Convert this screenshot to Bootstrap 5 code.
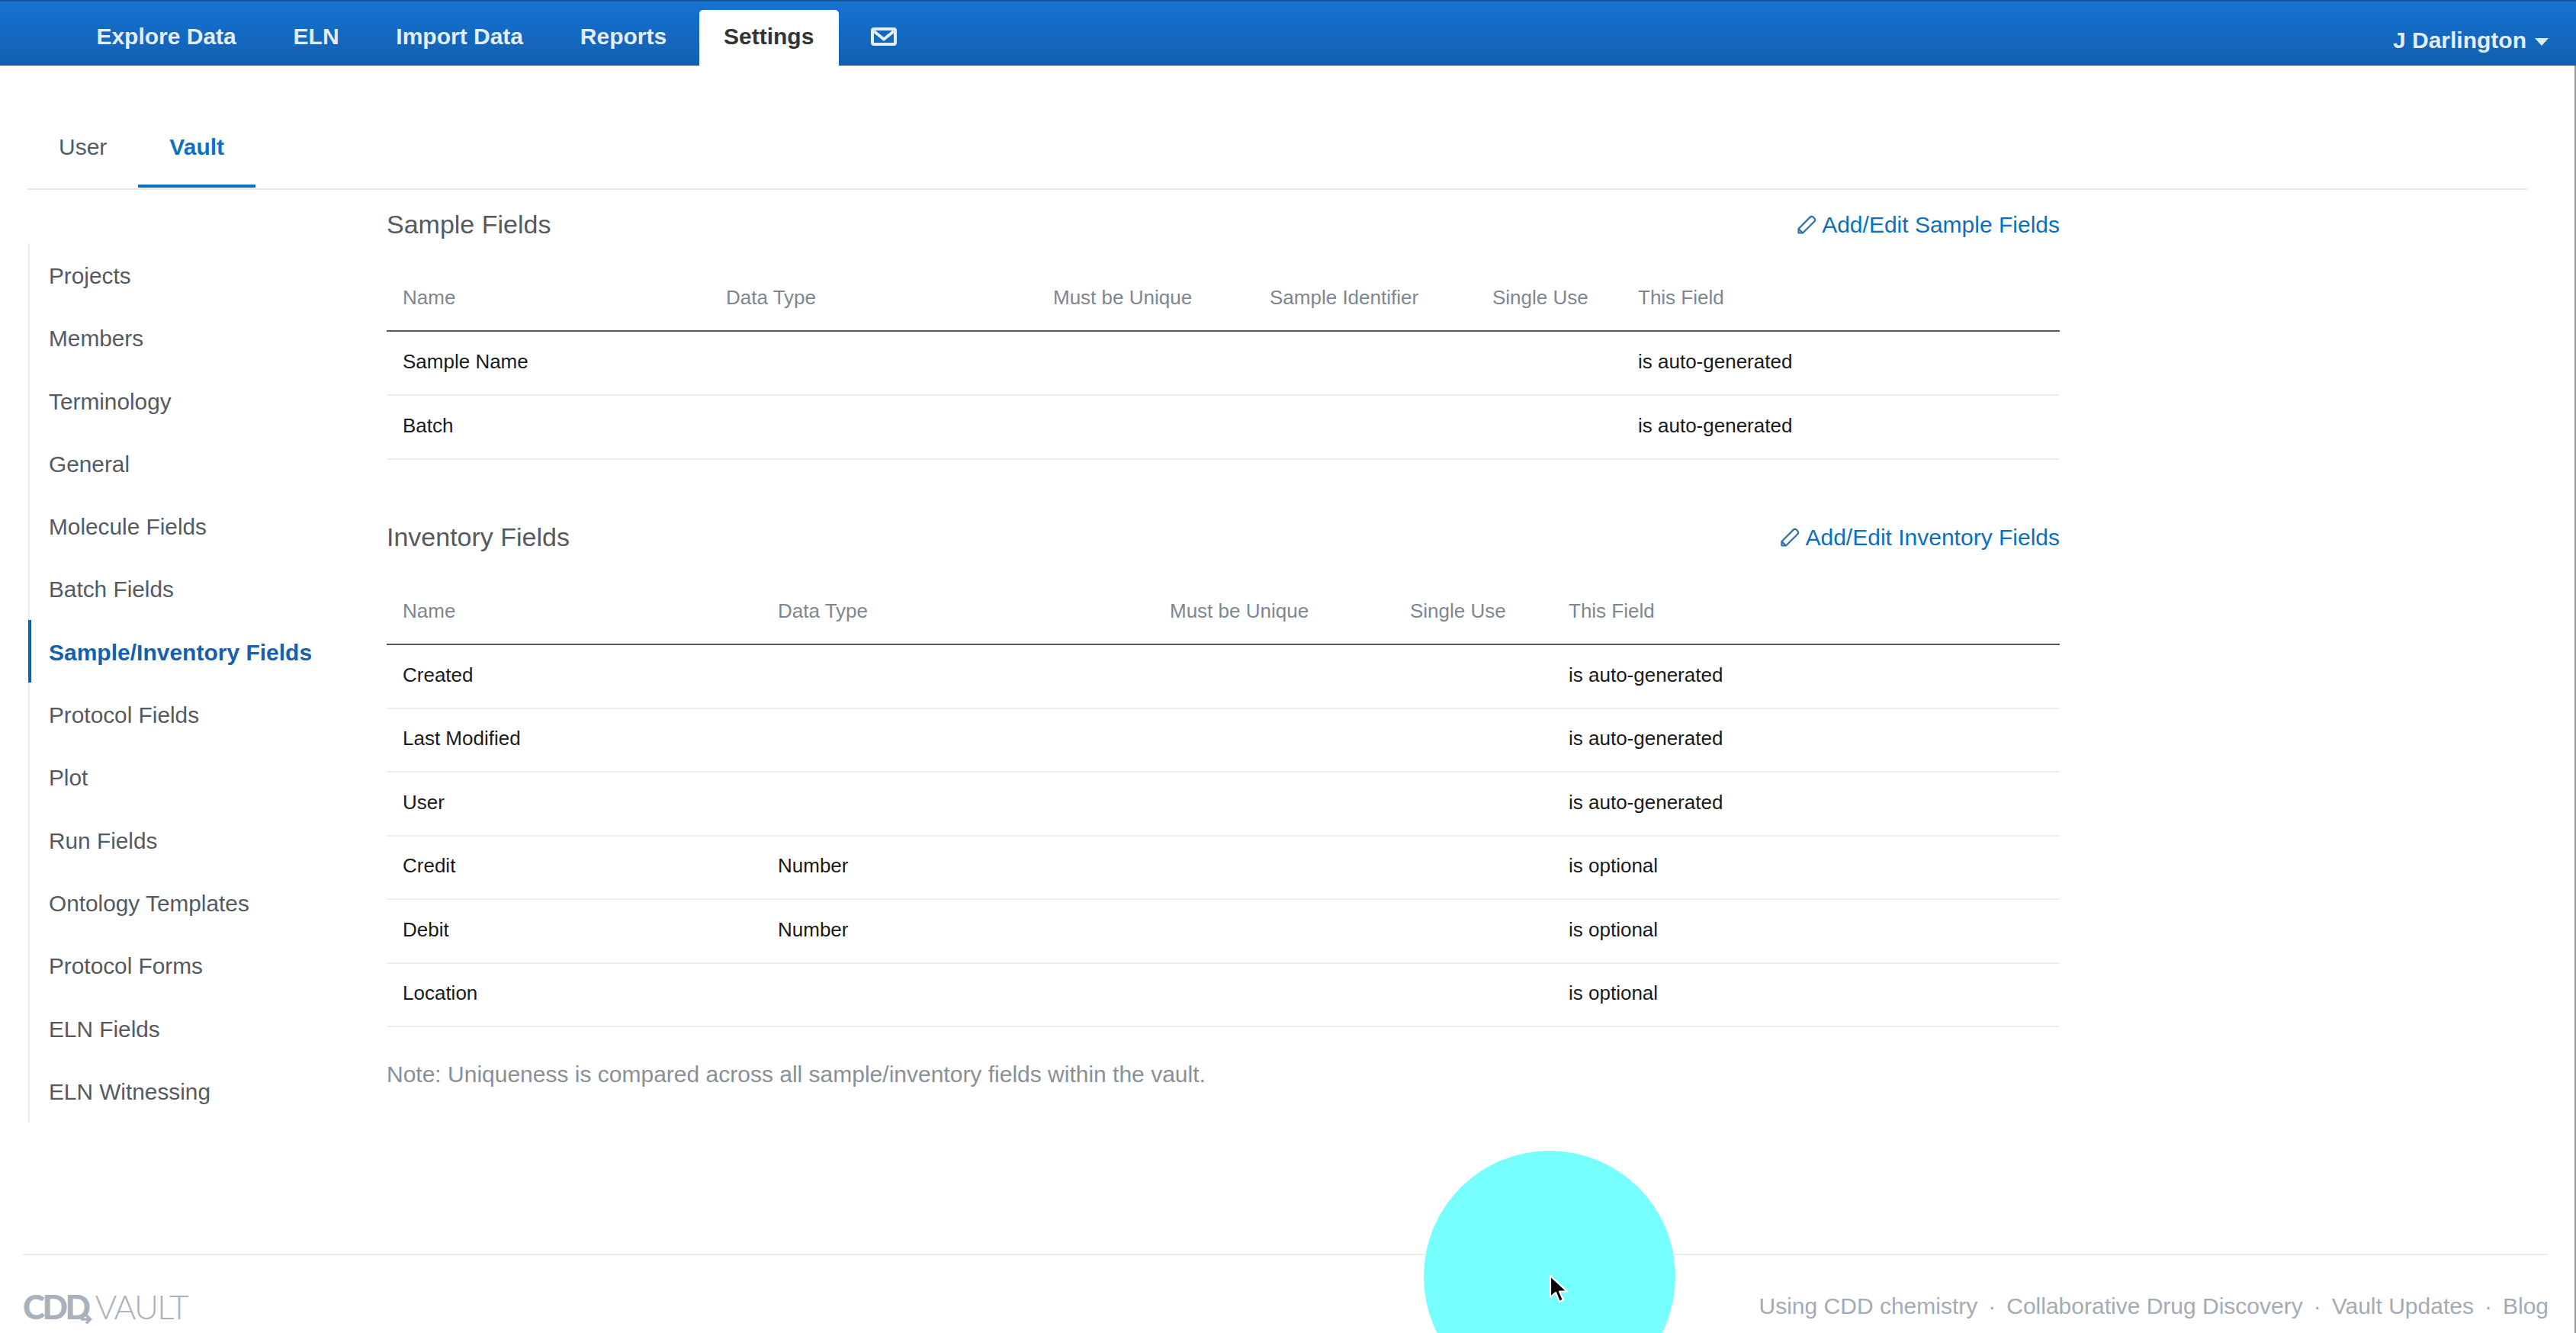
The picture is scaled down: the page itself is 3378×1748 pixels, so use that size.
<!DOCTYPE html>
<html lang="en">
<head>
<meta charset="utf-8">
<title>Settings</title>
<link href="https://cdn.jsdelivr.net/npm/bootstrap@5.3.0/dist/css/bootstrap.min.css" rel="stylesheet">
<style>
html,body{height:100%;}
body{font-family:"Liberation Sans",Arial,sans-serif;font-size:30px;color:#555a62;background:#fff;overflow:hidden;display:flex;flex-direction:column;position:relative;}
.topbar{height:86px;padding:0 36px 0 94px;background:linear-gradient(#1672d2,#1160b0);border-top:2px solid #14559c;align-items:flex-end;flex-wrap:nowrap;flex-shrink:0;}
.topnav{gap:10px;height:100%;align-items:flex-end;}
.topbar.navbar-expand .topnav .nav-link{height:73px;padding:15px 32.4px 0;font-size:30px;line-height:40px;font-weight:700;color:#e2edf8;border-radius:5px 5px 0 0;}
.topbar.navbar-expand .topnav .nav-link.active{background:#fff;color:#333;}
.topbar.navbar-expand .topnav .mail-link{padding-top:23px;}
.mail-link svg{display:block;}
.user-menu{color:#e2edf8;font-weight:700;font-size:30px;line-height:40px;margin-bottom:13px;display:flex;align-items:center;gap:11px;}
.caret-mark{width:0;height:0;border-left:9px solid transparent;border-right:9px solid transparent;border-top:10px solid #dfeaf6;margin-top:4px;}
.tabstrip{margin:0 64px 0 36px;height:163px;border-bottom:2px solid #e5e6e8;align-items:flex-end;flex-shrink:0;}
.tabstrip .nav-link{padding:0 41px;height:68px;line-height:29px;font-size:30px;color:#555a62;border-bottom:4px solid transparent;margin-bottom:1px;}
.tabstrip .nav-link.active{color:#0a72c6;font-weight:700;border-bottom-color:#0a70c4;}
.sidenav{width:470px;margin:70px 0 0 37px;height:1152px;border-left:2px solid #e9ecef;flex-shrink:0;flex-wrap:nowrap;}
.sidenav .nav-link{height:82.3px;line-height:85px;padding:0 0 0 23px;font-size:29.8px;color:#555a62;margin-left:-2px;border-left:4px solid transparent;white-space:nowrap;}
.sidenav .nav-link.active{color:#1560ad;font-weight:700;font-size:30px;border-left-color:#1560ad;}
.fields-pane{width:2194px;flex-shrink:0;}
.section-head{height:50px;margin:20px 0 27px;line-height:50px;}
.section-title{font-size:34px;font-weight:400;color:#555a62;margin:0;line-height:50px;}
.edit-link{font-size:30px;color:#0a6fc2;text-decoration:none;display:flex;align-items:center;gap:7px;padding-top:1px;}
.fields-table{table-layout:fixed;width:100%;margin-bottom:76px;font-size:26px;}
.fields-table th{height:88px;padding:2px 0 0 21px;vertical-align:middle;font-weight:400;color:#7d8792;border-bottom:2px solid #555a62;white-space:nowrap;}
.fields-table td{height:84px;padding:0 0 3px 21px;vertical-align:middle;color:#1a1a1a;border-bottom:2px solid #eceef0;}
.fields-table.inv-table th{height:89px;padding-top:3px;}
.fields-table.inv-table td{height:83.5px;padding-bottom:3px;}
.fields-table.inv-table{margin-bottom:0;}
.c1{width:424px}.c2{width:429px}.c3{width:284px}.c4{width:292px}.c5{width:191px}.c6{width:574px}
.i1{width:492px}.i2{width:514px}.i3{width:315px}.i4{width:208px}.i5{width:665px}
.note-line{font-size:30px;color:#8a8f96;margin:44px 0 0;line-height:36px;}
.pagefoot{margin:auto 36px 0 30px;height:104px;padding-top:32px;border-top:2px solid #ecedef;flex-shrink:0;}
.brand-logo{display:flex;align-items:center;line-height:44px;color:#a9b1bd;font-family:Lato,"Liberation Sans",sans-serif;font-size:44px;}
.brand-cdd{font-weight:900;letter-spacing:-3.5px;}
.brand-mark{margin-left:-9px;margin-bottom:-3px;}
.brand-vault{font-weight:300;margin-left:2px;letter-spacing:-1.7px;}
.foot-links{color:#a3abb6;font-size:30px;line-height:40px;}
.foot-links a{color:inherit;text-decoration:none;}
.foot-dot{margin:0 14px;}
.overlay-layer{position:absolute;top:0;left:0;right:0;bottom:0;overflow:hidden;pointer-events:none;}
.click-spot{position:absolute;left:1867px;top:1509px;width:330px;height:330px;border-radius:50%;background:rgba(115,255,255,.97);}
.mouse-arrow{position:absolute;left:2030px;top:1670px;}
.edge-rule{position:absolute;top:86px;right:0;bottom:0;width:2px;background:#999;}
</style>
</head>
<body>
<nav class="navbar navbar-expand topbar">
  <ul class="navbar-nav topnav">
    <li class="nav-item"><a class="nav-link" href="#">Explore Data</a></li>
    <li class="nav-item"><a class="nav-link" href="#">ELN</a></li>
    <li class="nav-item"><a class="nav-link" href="#">Import Data</a></li>
    <li class="nav-item"><a class="nav-link" href="#">Reports</a></li>
    <li class="nav-item"><a class="nav-link active" href="#">Settings</a></li>
    <li class="nav-item"><a class="nav-link mail-link" href="#" aria-label="Messages"><svg width="34" height="24" viewBox="0 0 34 24"><rect width="34" height="24" rx="4" fill="#e2edf8"/><rect x="4" y="4" width="26" height="16" fill="#1468ba"/><path d="M4 5 17 15.5 30 5" fill="none" stroke="#e2edf8" stroke-width="4"/></svg></a></li>
  </ul>
  <div class="user-menu ms-auto">J Darlington<span class="caret-mark"></span></div>
</nav>

<ul class="nav tabstrip">
  <li class="nav-item"><a class="nav-link" href="#">User</a></li>
  <li class="nav-item"><a class="nav-link active" href="#">Vault</a></li>
</ul>

<main class="d-flex">
  <ul class="nav flex-column sidenav">
    <li class="nav-item"><a class="nav-link" href="#">Projects</a></li>
    <li class="nav-item"><a class="nav-link" href="#">Members</a></li>
    <li class="nav-item"><a class="nav-link" href="#">Terminology</a></li>
    <li class="nav-item"><a class="nav-link" href="#">General</a></li>
    <li class="nav-item"><a class="nav-link" href="#">Molecule Fields</a></li>
    <li class="nav-item"><a class="nav-link" href="#">Batch Fields</a></li>
    <li class="nav-item"><a class="nav-link active" href="#">Sample/Inventory Fields</a></li>
    <li class="nav-item"><a class="nav-link" href="#">Protocol Fields</a></li>
    <li class="nav-item"><a class="nav-link" href="#">Plot</a></li>
    <li class="nav-item"><a class="nav-link" href="#">Run Fields</a></li>
    <li class="nav-item"><a class="nav-link" href="#">Ontology Templates</a></li>
    <li class="nav-item"><a class="nav-link" href="#">Protocol Forms</a></li>
    <li class="nav-item"><a class="nav-link" href="#">ELN Fields</a></li>
    <li class="nav-item"><a class="nav-link" href="#">ELN Witnessing</a></li>
  </ul>
  <section class="fields-pane">
    <div class="d-flex justify-content-between align-items-center section-head">
      <h2 class="section-title">Sample Fields</h2>
      <a class="edit-link" href="#"><svg width="25" height="25" viewBox="0 0 25 25"><path d="M1.5 23.5V18L16.8 2.6a2.6 2.6 0 0 1 3.7 0l1.9 1.9a2.6 2.6 0 0 1 0 3.7L7 23.5ZM1.5 18 7 23.5" fill="none" stroke="#2f6fa8" stroke-width="2.2" stroke-linejoin="round"/></svg>Add/Edit Sample Fields</a>
    </div>
    <table class="fields-table">
      <colgroup><col class="c1"><col class="c2"><col class="c3"><col class="c4"><col class="c5"><col class="c6"></colgroup>
      <thead><tr><th>Name</th><th>Data Type</th><th>Must be Unique</th><th>Sample Identifier</th><th>Single Use</th><th>This Field</th></tr></thead>
      <tbody>
        <tr><td>Sample Name</td><td></td><td></td><td></td><td></td><td>is auto-generated</td></tr>
        <tr><td>Batch</td><td></td><td></td><td></td><td></td><td>is auto-generated</td></tr>
      </tbody>
    </table>
    <div class="d-flex justify-content-between align-items-center section-head">
      <h2 class="section-title">Inventory Fields</h2>
      <a class="edit-link" href="#"><svg width="25" height="25" viewBox="0 0 25 25"><path d="M1.5 23.5V18L16.8 2.6a2.6 2.6 0 0 1 3.7 0l1.9 1.9a2.6 2.6 0 0 1 0 3.7L7 23.5ZM1.5 18 7 23.5" fill="none" stroke="#2f6fa8" stroke-width="2.2" stroke-linejoin="round"/></svg>Add/Edit Inventory Fields</a>
    </div>
    <table class="fields-table inv-table">
      <colgroup><col class="i1"><col class="i2"><col class="i3"><col class="i4"><col class="i5"></colgroup>
      <thead><tr><th>Name</th><th>Data Type</th><th>Must be Unique</th><th>Single Use</th><th>This Field</th></tr></thead>
      <tbody>
        <tr><td>Created</td><td></td><td></td><td></td><td>is auto-generated</td></tr>
        <tr><td>Last Modified</td><td></td><td></td><td></td><td>is auto-generated</td></tr>
        <tr><td>User</td><td></td><td></td><td></td><td>is auto-generated</td></tr>
        <tr><td>Credit</td><td>Number</td><td></td><td></td><td>is optional</td></tr>
        <tr><td>Debit</td><td>Number</td><td></td><td></td><td>is optional</td></tr>
        <tr><td>Location</td><td></td><td></td><td></td><td>is optional</td></tr>
      </tbody>
    </table>
    <p class="note-line">Note: Uniqueness is compared across all sample/inventory fields within the vault.</p>
  </section>
</main>

<footer class="d-flex justify-content-between align-items-center pagefoot">
  <div class="brand-logo"><span class="brand-cdd">CDD</span><svg class="brand-mark align-self-end" width="16" height="16" viewBox="0 0 16 16"><path d="M0 8h11M7 2.5 12.5 8 7 13.5" fill="none" stroke="#a9b1bd" stroke-width="3.5"/></svg><span class="brand-vault">VAULT</span></div>
  <div class="foot-links"><a href="#">Using CDD chemistry</a><span class="foot-dot">·</span><a href="#">Collaborative Drug Discovery</a><span class="foot-dot">·</span><a href="#">Vault Updates</a><span class="foot-dot">·</span><a href="#">Blog</a></div>
</footer>

<div class="overlay-layer">
  <div class="click-spot"></div>
  <svg class="mouse-arrow" width="28" height="40" viewBox="0 0 28 40"><path d="M3 3V31L10 25 15 37 20 34.5 15 23.5H25Z" fill="#000" stroke="#fff" stroke-width="2.2" stroke-linejoin="round"/></svg>
</div>
<div class="edge-rule"></div>
<script src="https://cdn.jsdelivr.net/npm/bootstrap@5.3.0/dist/js/bootstrap.bundle.min.js"></script>
</body>
</html>
